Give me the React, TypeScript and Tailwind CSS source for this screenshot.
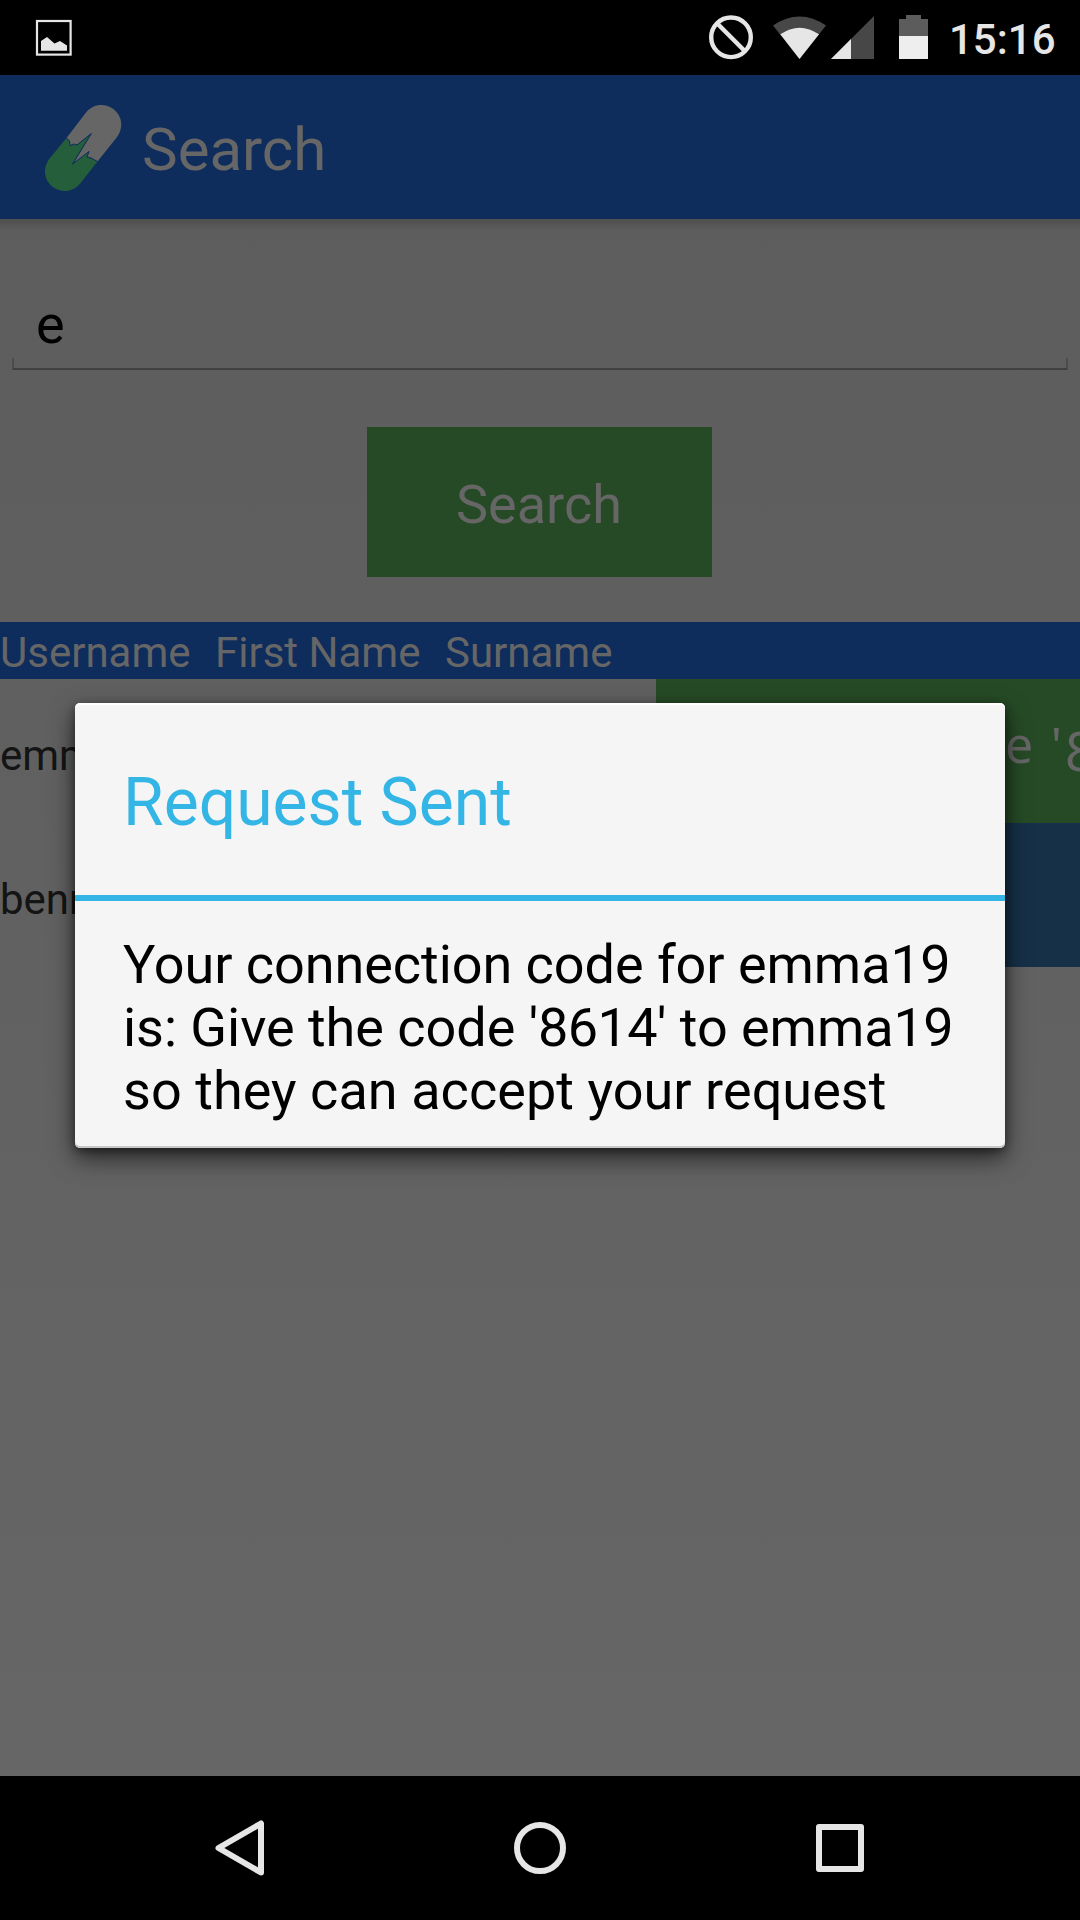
import React from "react";

function StatusBar() {
  return (
    <div className="flex h-[75px] items-start bg-black">
      <svg className="h-[75px] w-[700px]" viewBox="0 0 700 75">
        <rect x="37" y="21" width="33.6" height="33.6" fill="none" stroke="#e6e6e6" strokeWidth="2.2" />
        <path d="M41 41 L47 37 L54.5 43.5 L60 41 L67 45.5 V50.7 H41 Z" fill="#e6e6e6" />
      </svg>
      <svg className="h-[75px] w-[245px]" viewBox="700 0 245 75">
        <circle cx="731" cy="37.3" r="19.8" fill="none" stroke="#e6e6e6" strokeWidth="4.4" />
        <path d="M717.5 23.8 L744.5 50.8" stroke="#e6e6e6" strokeWidth="4.4" />
        <path d="M799.5 59 L773 25.5 Q799.500 7.500 826 25.500 Z" fill="#474747" />
        <path d="M799.5 59 L780.3 34.300 Q799.500 21 819 34.300 Z" fill="#e6e6e6" />
        <path d="M831 59 L874 16 V59 Z" fill="#474747" />
        <path d="M831 59 L851 39 V59 Z" fill="#e6e6e6" />
        <path d="M906 15 h15 v4 h7 v17 h-29 v-17 h7 Z" fill="#5c5c5c" />
        <rect x="899" y="36" width="29" height="23" fill="#eeeeee" />
      </svg>
      <span className="ml-[4px] mt-[15px] text-[42px] font-medium leading-[50px] text-[#e6e6e6]">15:16</span>
    </div>
  );
}

function AppBar() {
  return (
    <header className="flex h-[144px] items-center bg-[#0f2d5c] pl-[36px]">
      <svg className="h-[96px] w-[96px]" viewBox="36 99 96 96">
        <path
          d="M66.500 138 L86 112.500 A19.700 19.700 0 0 1 117 136.900 L97.500 161.500 L91 158 L87 157 L89 151.500 L72.500 164.500 L91.700 133.500 L78 144.500 L70 145.500 L69.500 141 Z"
          fill="#666666"
        />
        <path
          d="M66.500 138 L49.200 159.100 A19.700 19.700 0 0 0 80.200 183.500 L97.500 161.500 L91 158 L87 157 L89 151.500 L72.500 164.500 L91.700 133.500 L78 144.500 L70 145.500 L69.500 141 Z"
          fill="#245e3b"
        />
        <path
          d="M66.500 138 L69.500 141 L70 145.500 L74 144 L77 145 L91.300 133.500 L72.500 164 L89 151.500 L87 157 L91 158 L97.500 161.500"
          fill="none"
          stroke="#0f2d5c"
          strokeWidth="1"
        />
      </svg>
      <h1 className="ml-[10px] pt-[6px] text-[60px] leading-[70px] text-[#666666]">Search</h1>
    </header>
  );
}

function Results() {
  return (
    <section className="mt-[45px] text-[42px] leading-[49px]">
      <div className="flex h-[57px] items-center bg-[#0f2d5c] pt-[4px] text-[#666666]">
        <span className="w-[215px]">Username</span>
        <span className="w-[230px]">First Name</span>
        <span>Surname</span>
      </div>
      <div className="flex h-[144px] items-center overflow-hidden text-[#141414]">
        <span className="w-[656px] pt-[9px]">emma19</span>
        <div className="flex h-full w-[424px] items-center justify-end overflow-hidden bg-[#264a26] font-['Noto_Sans'] text-[50px] text-[#666666]">
          <span className="-mr-[16px] flex items-baseline pb-[16px]">
            <span className="whitespace-pre [word-spacing:4.5px]">Code '</span>
            <span className="ml-[3px] w-[31px] translate-y-[8px] text-[54px]">8</span>
          </span>
        </div>
      </div>
      <div className="flex h-[144px] items-center text-[#141414]">
        <span className="w-[656px] pt-[9px]">benny</span>
        <div className="h-full w-[424px] bg-[#163048]" />
      </div>
    </section>
  );
}

function RequestDialog() {
  return (
    <div
      role="dialog"
      className="absolute left-[75px] top-[703px] h-[445px] w-[930px] rounded-[5px] bg-[#f5f5f5] shadow-[inset_0_2px_0_#fff,inset_0_-2px_0_#c8c8c8,0_10px_24px_rgba(0,0,0,0.6),0_3px_10px_rgba(0,0,0,0.4)]"
    >
      <h2 className="flex h-[192px] items-center pl-[48px] pt-[6px] text-[66px] leading-[77px] text-[#33b5e5]">Request Sent</h2>
      <div className="h-[6px] bg-[#33b5e5]" />
      <p className="whitespace-nowrap pl-[48px] pt-[32px] text-[54px] leading-[63px] text-black">
        <span className="tracking-[-0.05px]">Your connection code for emma</span>
        <span className="tracking-[-0.6px]">19</span>
        <br />
        <span className="tracking-[-0.03px]">is: Give the code '</span>
        <span className="tracking-[-0.6px]">8614</span>
        <span className="tracking-[-0.05px]">' to emma</span>
        <span className="tracking-[-0.6px]">19</span>
        <br />
        <span className="tracking-[0.05px]">so they can accept your request</span>
      </p>
    </div>
  );
}

function NavBar() {
  return (
    <nav className="flex h-[144px] items-center justify-center gap-[204px] bg-black">
      <svg className="h-[96px] w-[96px]" viewBox="192 1800 96 96" fill="none" stroke="#e6e6e6" strokeWidth="6" strokeLinejoin="round">
        <path d="M261 1823.500 V1872.500 L218.500 1848 Z" />
      </svg>
      <svg className="h-[96px] w-[96px]" viewBox="492 1800 96 96" fill="none" stroke="#e6e6e6" strokeWidth="6">
        <circle cx="540" cy="1848" r="23" />
      </svg>
      <svg className="h-[96px] w-[96px]" viewBox="792 1800 96 96" fill="none" stroke="#e6e6e6" strokeWidth="6" strokeLinejoin="round">
        <rect x="819" y="1827" width="42" height="42" />
      </svg>
    </nav>
  );
}

export default function App() {
  return (
    <div className="relative flex h-[1920px] w-[1080px] flex-col overflow-hidden bg-black font-[Roboto,sans-serif]">
      <StatusBar />
      <AppBar />
      <main className="flex-1 bg-linear-to-b from-[#5d5d5d] to-[#666666]">
        <div className="h-[12px] bg-linear-to-b from-black/15 to-transparent" />
        <div className="mx-[12px] mt-[61px] flex h-[78px] flex-col">
          <div className="flex h-[66px] items-center pb-[2px] pl-[24px] text-[54px] leading-[63px] text-black">e</div>
          <div className="h-[12px] border-x-2 border-b-2 border-x-[#4c4c4c] border-b-[#404040]" />
        </div>
        <div className="ml-[367px] mt-[57px] flex h-[150px] w-[345px] items-center justify-center bg-[#264a26] pr-px pt-[4px] text-[54px] leading-[63px] text-[#666666]">
          Search
        </div>
        <Results />
      </main>
      <NavBar />
      <RequestDialog />
    </div>
  );
}
